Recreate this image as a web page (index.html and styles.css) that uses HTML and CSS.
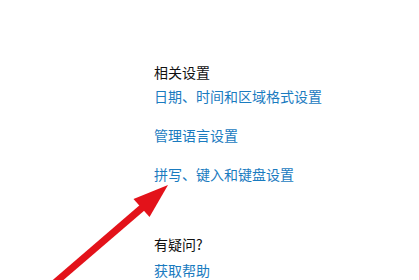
FILE: index.html
```html
<!DOCTYPE html>
<html lang="zh-CN">
<head>
  <meta charset="UTF-8" />
  <title>相关设置</title>
  <link rel="stylesheet" href="styles.css">
</head>
<body>

  <!-- Related settings -->
  <div class="panel">
    <div class="section">
      <h2>相关设置</h2>
      <a href="#" class="link">日期、时间和区域格式设置</a>
      <a href="#" class="link">管理语言设置</a>
      <a href="#" class="link">拼写、键入和键盘设置</a>
    </div>

    <div class="section help">
      <h2>有疑问?</h2>
      <a href="#" class="link">获取帮助</a>
    </div>
  </div>

  <!-- Red annotation arrow -->
  <svg class="arrow" width="419" height="280" viewBox="0 0 419 280">
    <line x1="43" y1="293" x2="143" y2="207" stroke="#e3121a" stroke-width="7" />
    <polygon points="168,185 133.5,199 149.5,217" fill="#e3121a" />
  </svg>

</body>
</html>
```

FILE: styles.css
```css
body {
  margin: 0;
  background: #fff;
  font-family: "Noto Sans CJK SC", "Noto Sans", sans-serif;
  font-size: 14px;
  line-height: 20px;
  overflow: hidden;
  height: 280px;
}

.panel {
  padding: 62px 0 0 154px;
}

.section {
  display: flex;
  flex-direction: column;
  align-items: flex-start;
}

h2 {
  margin: 0 0 4px;
  font-size: 14px;
  font-weight: normal;
  color: #111;
}

.link {
  color: #1a7bbf;
  text-decoration: none;
  margin-bottom: 19px;
}

.link:last-child {
  margin-bottom: 0;
}

.help {
  margin-top: 50px;
}

.help h2 {
  margin-bottom: 6px;
}

.arrow {
  position: absolute;
  left: 0;
  top: 0;
}
```
